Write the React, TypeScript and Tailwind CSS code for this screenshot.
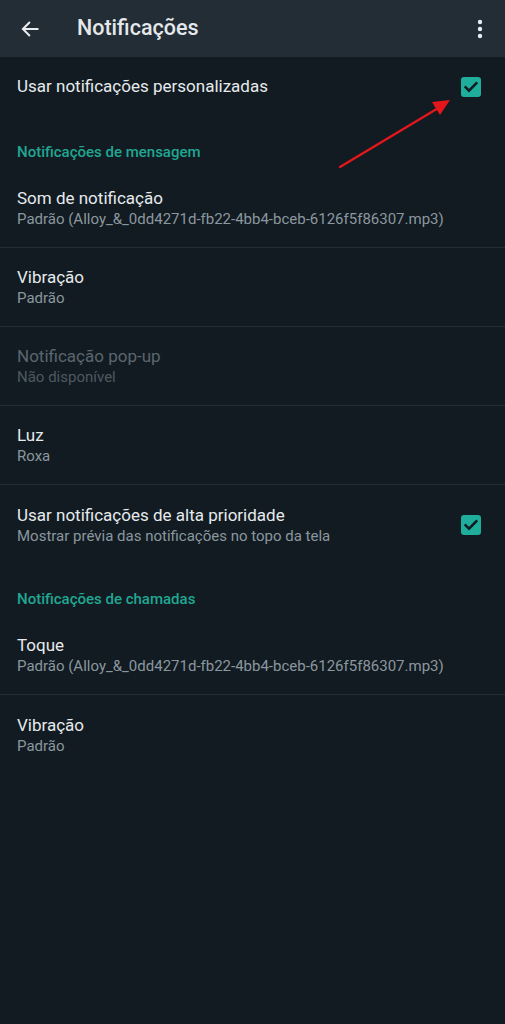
import React from "react";

function Check() {
  return (
    <div className="w-[20px] h-[20px] rounded-[3px] bg-[#1fae9c] flex items-center justify-center shrink-0">
      <svg width="16" height="16" viewBox="0 0 24 24" fill="none">
        <path d="M4 12.5l5 5L20 6.5" stroke="#111b21" strokeWidth="3.8" strokeLinecap="square" />
      </svg>
    </div>
  );
}

function Item({ title, sub, disabled, divider = true, check }: { title: string; sub: string; disabled?: boolean; divider?: boolean; check?: boolean }) {
  return (
    <div className={`h-[79px] flex items-center pl-[17px] pr-[24px] ${divider ? "border-b border-[#222d34]" : ""}`}>
      <div className="flex-1 flex flex-col pt-[1px]">
        <div className={`text-[17px] leading-[22px] ${disabled ? "text-[#5b666e]" : "text-[#e6eaec]"}`}>{title}</div>
        <div className={`text-[15px] leading-[21px] ${disabled ? "text-[#4d5960]" : "text-[#8b979e]"}`}>{sub}</div>
      </div>
      {check && <Check />}
    </div>
  );
}

function Section({ label }: { label: string }) {
  return (
    <div className="pt-[25px] pb-[7px] pl-[17px] text-[15px] leading-[20px] font-medium text-[#21a691]">{label}</div>
  );
}

export default function App() {
  const file = "Padrão (Alloy_&_0dd4271d-fb22-4bb4-bceb-6126f5f86307.mp3)";
  return (
    <div className="relative w-[505px] h-[1024px] bg-[#121b22] overflow-hidden" style={{ fontFamily: "Roboto, 'Noto Sans', sans-serif" }}>
      <div className="h-[57px] bg-[#232d36] flex items-center pl-[20px] pr-[22px]">
        <svg width="20" height="20" viewBox="0 0 24 24" fill="none" className="shrink-0">
          <path d="M21 12H4M11 4.5L3.5 12l7.5 7.5" stroke="#e9edef" strokeWidth="2.4" strokeLinecap="square" />
        </svg>
        <div className="ml-[37px] text-[21.5px] font-medium text-[#e4e8ea] flex-1">Notificações</div>
        <svg width="6" height="20" viewBox="0 0 6 20" className="shrink-0">
          <circle cx="3" cy="3" r="2.2" fill="#e9edef" />
          <circle cx="3" cy="10" r="2.2" fill="#e9edef" />
          <circle cx="3" cy="17" r="2.2" fill="#e9edef" />
        </svg>
      </div>
      <div className="h-[60px] flex items-center pl-[17px] pr-[24px]">
        <div className="flex-1 text-[17px] text-[#e6eaec]">Usar notificações personalizadas</div>
        <Check />
      </div>
      <Section label="Notificações de mensagem" />
      <Item title="Som de notificação" sub={file} />
      <Item title="Vibração" sub="Padrão" />
      <Item title="Notificação pop-up" sub="Não disponível" disabled />
      <Item title="Luz" sub="Roxa" />
      <Item title="Usar notificações de alta prioridade" sub="Mostrar prévia das notificações no topo da tela" divider={false} check />
      <Section label="Notificações de chamadas" />
      <Item title="Toque" sub={file} />
      <Item title="Vibração" sub="Padrão" divider={false} />
      <svg className="absolute left-0 top-0 pointer-events-none" width="505" height="300" viewBox="0 0 505 300">
        <line x1="340" y1="167" x2="440" y2="107" stroke="#e3161c" strokeWidth="2.4" strokeLinecap="round" />
        <polygon points="450,100 432,102 440,115" fill="#e3161c" />
      </svg>
    </div>
  );
}
